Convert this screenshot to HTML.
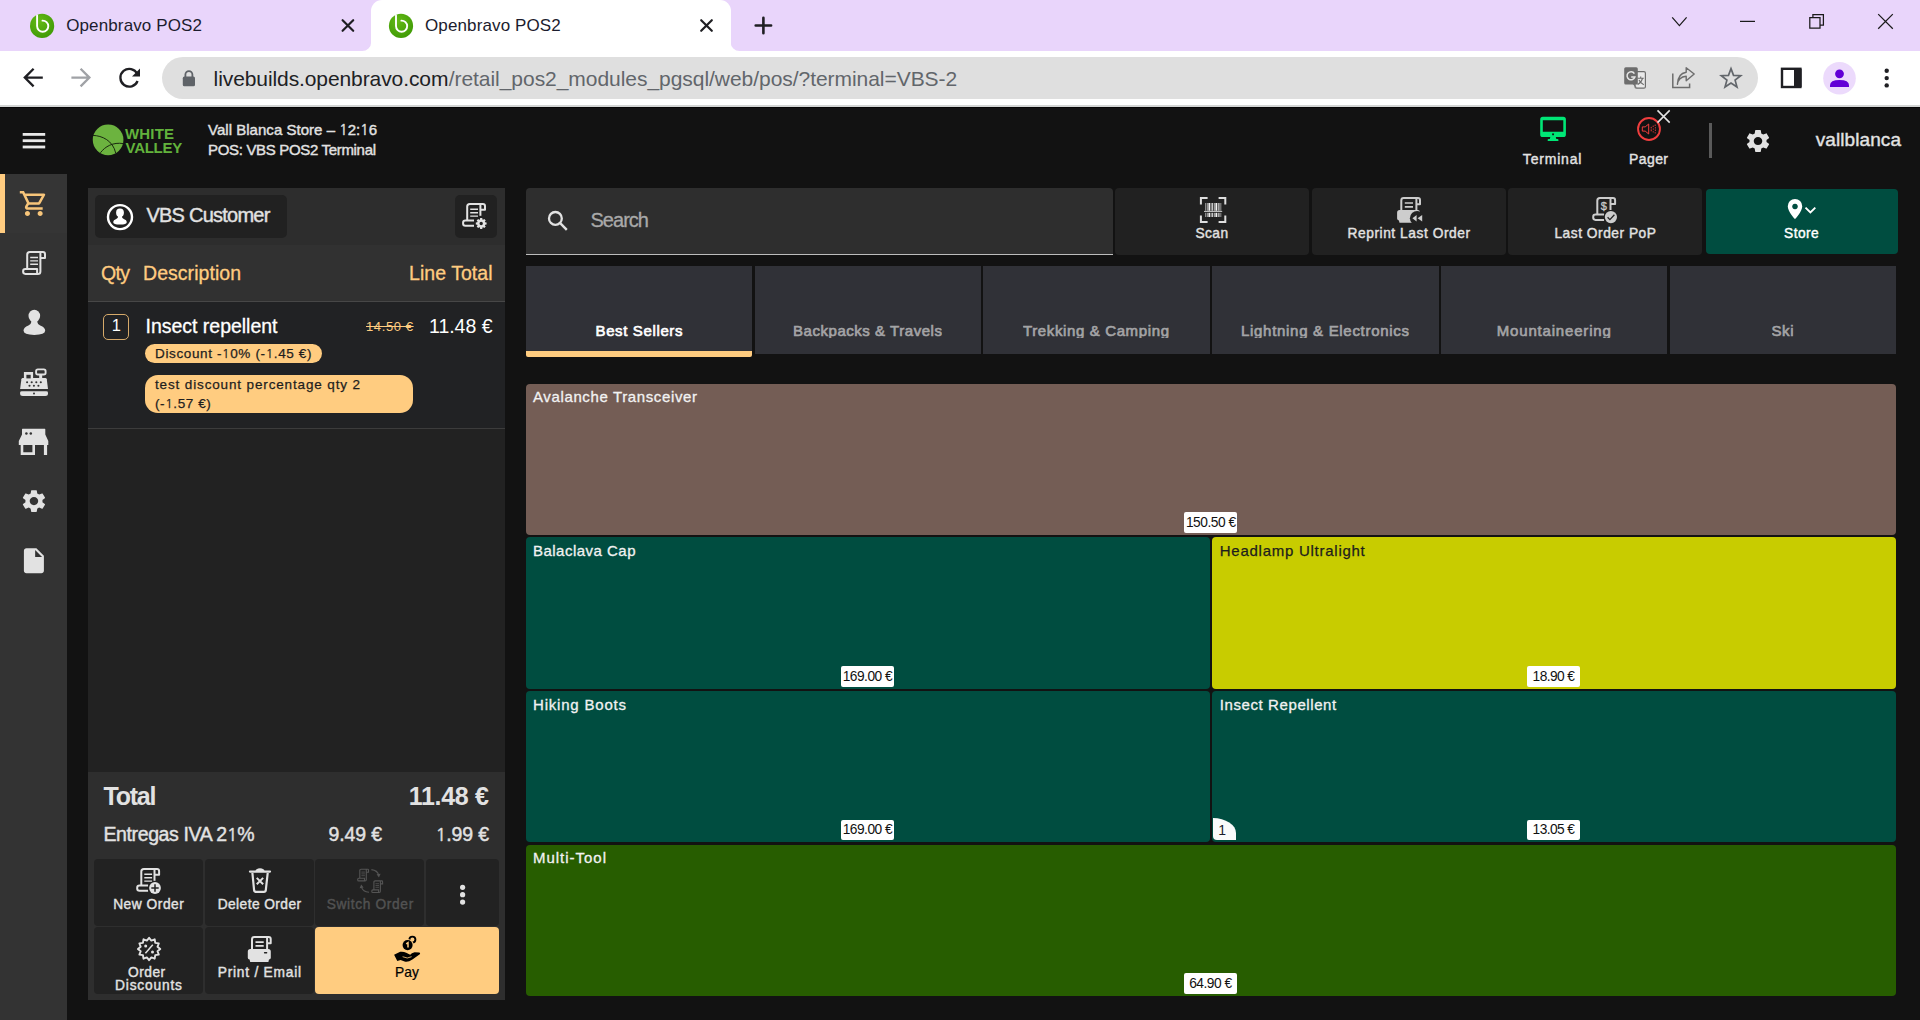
<!DOCTYPE html>
<html lang="en"><head><meta charset="utf-8"><title>Openbravo POS2</title>
<style>
html,body{margin:0;padding:0}
body{width:1920px;height:1020px;overflow:hidden;position:relative;background:#121212;font-family:"Liberation Sans",Arial,sans-serif;}
.r{position:absolute}
.t{position:absolute;white-space:pre;}
.i{position:absolute;display:block;overflow:visible}
.n1{font-family:NanumGothic,"Liberation Sans",sans-serif;font-size:.92em}

</style></head>
<body>
<div class="r" style="left:0px;top:0px;width:1920px;height:51px;background:#e9d5fb;"></div>
<div class="r" style="left:371px;top:0px;width:360px;height:51px;background:#ffffff;border-radius:11px 11px 0 0;"></div>
<div class="r" style="left:0px;top:51px;width:1920px;height:54px;background:#ffffff;"></div>
<div class="r" style="left:0px;top:105px;width:1920px;height:2px;background:#d3d5d4;"></div>
<div class="r" style="left:162px;top:57px;width:1595.5px;height:42px;background:#dfdfdf;border-radius:21px;"></div>
<div class="r" style="left:0px;top:107px;width:1920px;height:913px;background:#121212;"></div>
<div class="r" style="left:0px;top:107px;width:1920px;height:1px;background:#060606;"></div>
<div class="r" style="left:0px;top:174px;width:67px;height:846px;background:#333333;"></div>
<div class="r" style="left:0px;top:174px;width:67px;height:59px;background:#353535;"></div>
<div class="r" style="left:0px;top:174px;width:5px;height:59px;background:#ffcc80;"></div>
<div class="r" style="left:88px;top:188px;width:417px;height:57px;background:#2d2d2d;"></div>
<div class="r" style="left:88px;top:245px;width:417px;height:57px;background:#313131;"></div>
<div class="r" style="left:88px;top:301px;width:417px;height:1px;background:#474747;"></div>
<div class="r" style="left:88px;top:302px;width:417px;height:126px;background:#212224;"></div>
<div class="r" style="left:88px;top:428px;width:417px;height:1px;background:#3c3c3c;"></div>
<div class="r" style="left:88px;top:429px;width:417px;height:343px;background:#222222;"></div>
<div class="r" style="left:88px;top:772px;width:417px;height:228px;background:#2e2e2e;"></div>
<div class="r" style="left:95px;top:195px;width:192px;height:43px;background:#212121;border-radius:5px;"></div>
<div class="r" style="left:455px;top:195px;width:42px;height:43px;background:#212121;border-radius:5px;"></div>
<div class="r" style="left:103px;top:314px;width:26px;height:26px;background:transparent;box-sizing:border-box;border:1px solid #d6aa6a;border-radius:5px;"></div>
<div class="r" style="left:144.5px;top:344px;width:177px;height:19px;background:#ffcc80;border-radius:9.5px;"></div>
<div class="r" style="left:144.5px;top:375px;width:268px;height:38px;background:#ffcc80;border-radius:13px;"></div>
<div class="r" style="left:94px;top:859px;width:109.1px;height:67px;background:#222222;border-radius:4px;"></div>
<div class="r" style="left:204.6px;top:859px;width:109.1px;height:67px;background:#222222;border-radius:4px;"></div>
<div class="r" style="left:315.2px;top:859px;width:109.1px;height:67px;background:#222222;border-radius:4px;"></div>
<div class="r" style="left:425.8px;top:859px;width:73px;height:67px;background:#222222;border-radius:4px;"></div>
<div class="r" style="left:94px;top:927px;width:109.1px;height:67px;background:#222222;border-radius:4px;"></div>
<div class="r" style="left:204.6px;top:927px;width:109.1px;height:67px;background:#222222;border-radius:4px;"></div>
<div class="r" style="left:315.2px;top:927px;width:183.6px;height:67px;background:#ffcc80;border-radius:4px;"></div>
<div class="r" style="left:526px;top:188px;width:587px;height:66px;background:#2e2e2e;border-radius:4px 4px 0 0;"></div>
<div class="r" style="left:526px;top:253.6px;width:587px;height:1.5px;background:#bdbdbd;"></div>
<div class="r" style="left:1115px;top:188px;width:194px;height:67px;background:#212121;border-radius:4px;"></div>
<div class="r" style="left:1312px;top:188px;width:194px;height:67px;background:#212121;border-radius:4px;"></div>
<div class="r" style="left:1508px;top:188px;width:194px;height:67px;background:#212121;border-radius:4px;"></div>
<div class="r" style="left:1706px;top:189px;width:192px;height:65px;background:#004d40;border-radius:4px;"></div>
<div class="r" style="left:526px;top:266px;width:226.3px;height:85px;background:#303137;"></div>
<div class="r" style="left:526px;top:351px;width:226.3px;height:6px;background:#ffcc80;border-radius:0 0 2px 2px;"></div>
<div class="r" style="left:754.74px;top:266px;width:226.3px;height:88px;background:#303137;"></div>
<div class="r" style="left:983.48px;top:266px;width:226.3px;height:88px;background:#303137;"></div>
<div class="r" style="left:1212.22px;top:266px;width:226.3px;height:88px;background:#303137;"></div>
<div class="r" style="left:1440.96px;top:266px;width:226.3px;height:88px;background:#303137;"></div>
<div class="r" style="left:1669.7px;top:266px;width:226.3px;height:88px;background:#303137;"></div>
<div class="r" style="left:526px;top:384px;width:1370px;height:151px;background:#745d55;border-radius:4px;"></div>
<div class="r" style="left:526px;top:537px;width:684px;height:152px;background:#004d40;border-radius:4px;"></div>
<div class="r" style="left:1212px;top:537px;width:684px;height:152px;background:#c8cc00;border-radius:4px;"></div>
<div class="r" style="left:526px;top:691px;width:684px;height:151px;background:#004d40;border-radius:4px;"></div>
<div class="r" style="left:1212px;top:691px;width:684px;height:151px;background:#004d40;border-radius:4px;"></div>
<div class="r" style="left:526px;top:845px;width:1370px;height:151px;background:#275d00;border-radius:4px;"></div>
<div class="r" style="left:1184px;top:512px;width:53px;height:21px;background:#ffffff;border-radius:2px;"></div>
<div class="r" style="left:841px;top:666px;width:53px;height:21px;background:#ffffff;border-radius:2px;"></div>
<div class="r" style="left:1527px;top:666px;width:53px;height:21px;background:#ffffff;border-radius:2px;"></div>
<div class="r" style="left:841px;top:820px;width:53px;height:20px;background:#ffffff;border-radius:2px;"></div>
<div class="r" style="left:1527px;top:820px;width:53px;height:20px;background:#ffffff;border-radius:2px;"></div>
<div class="r" style="left:1184px;top:973px;width:53px;height:21px;background:#ffffff;border-radius:2px;"></div>
<div class="r" style="left:1213px;top:818px;width:23.3px;height:22px;background:#fafafa;border-radius:0 23px 0 4px / 0 15px 0 4px;"></div>
<div class="r" style="left:1709px;top:123px;width:3px;height:35px;background:#5a5a5a;"></div>

<svg class="i" style="left:0;top:0" width="1920" height="1020" viewBox="0 0 1920 1020"><defs><radialGradient id="fav" cx="40%" cy="30%" r="75%"><stop offset="0" stop-color="#63b915"/><stop offset="1" stop-color="#3f9a06"/></radialGradient></defs>
<circle cx="42.1" cy="25.9" r="12.1" fill="url(#fav)"/><path d="M37.1 15.499999999999998V26.099999999999998A5.6 5.6 0 0 0 48.300000000000004 26.099999999999998A5.6 5.600 0 0 0 42.5 20.599999999999998" stroke="#fff" stroke-width="1.9" stroke-linecap="round" fill="none"/>
<circle cx="401" cy="25.9" r="12.1" fill="url(#fav)"/><path d="M396 15.499999999999998V26.099999999999998A5.6 5.6 0 0 0 407.2 26.099999999999998A5.6 5.600 0 0 0 401.4 20.599999999999998" stroke="#fff" stroke-width="1.9" stroke-linecap="round" fill="none"/>
<path d="M342.59999999999997 20.2L353.2 30.8M353.2 20.2L342.59999999999997 30.8" stroke="#1f1f23" stroke-width="2.2" stroke-linecap="round" fill="none"/>
<path d="M701.2 20.2L711.8 30.8M711.8 20.2L701.2 30.8" stroke="#1f1f23" stroke-width="2.2" stroke-linecap="round" fill="none"/>
<path d="M755.7 25.5H771.1M763.4 17.8V33.200" stroke="#1f1f23" stroke-width="2.6" stroke-linecap="round" fill="none"/>
<path d="M1672.2 17.4L1679.4 25.6L1686.6 17.4" stroke="#1a1a1a" stroke-width="1.25" fill="none"/>
<path d="M1740 21.4H1755" stroke="#1a1a1a" stroke-width="1.25" fill="none"/>
<path d="M1809.8 17.5H1820V28H1809.8Z M1812.9 17.2V14.6H1823.4V25.2H1820.3" stroke="#1a1a1a" stroke-width="1.25" fill="none"/>
<path d="M1878.2 14.099999999999998L1892.8 28.7M1892.8 14.099999999999998L1878.2 28.7" stroke="#1a1a1a" stroke-width="1.25" stroke-linecap="butt" fill="none"/>
<path d="M362 51H371.2V42A9 9 0 0 1 362 51Z" fill="#fff"/>
<path d="M739.800 51H730.6V42A9 9 0 0 0 739.800 51Z" fill="#fff"/>
<path d="M42.8 77.6H25.2M33.6 68.8L24.8 77.6L33.6 86.4" stroke="#1f1f23" stroke-width="2.3" fill="none" stroke-linejoin="miter"/>
<path d="M71.4 77.6H89M80.6 68.8L89.4 77.6L80.6 86.4" stroke="#a0a2a6" stroke-width="2.3" fill="none"/>
<path d="M137.3 73.8A8.9 8.9 0 1 0 137.6 81" stroke="#1f1f23" stroke-width="2.3" fill="none"/>
<path d="M140 68.4V76.4H132Z" fill="#1f1f23"/>
<rect x="182.8" y="76.6" width="12.2" height="9.7" rx="1.6" fill="#5f6368"/>
<path d="M185.4 77V74.6A3.5 3.5 0 0 1 192.4 74.6V77" stroke="#5f6368" stroke-width="1.8" fill="none"/>
<rect x="1635" y="71.6" width="10.4" height="16.6" rx="1.5" fill="#e9e9e9" stroke="#6d6d6d" stroke-width="1.2"/>
<path d="M1637.6 78.2H1643.8M1640.7 76.6V78.2M1642.6 78.2Q1641.6 82.4 1637.8 84.6M1639 80Q1640.6 83.4 1643.8 84.8" stroke="#6d6d6d" stroke-width="1.1" fill="none"/>
<path d="M1625.8 67.2H1636.2Q1637.8 67.2 1637.8 68.8V84.6H1634.5L1637.6 88.6 1633 84.6H1625.8Q1624.2 84.6 1624.2 83V68.8Q1624.2 67.2 1625.8 67.2Z" fill="#6d6d6d"/>
<path d="M1634.4 73.6A4 4 0 1 0 1634.9 77H1631.2" stroke="#e6e6e6" stroke-width="1.5" fill="none"/>
<path d="M1672.8 73.5V87.6H1689.6V83.4" stroke="#6d6d6d" stroke-width="1.5" fill="none"/>
<path d="M1677.4 84.4Q1678.2 77 1686.2 76.2V80.8L1694.2 74L1686.2 67.8V72.2Q1677.8 73.4 1677.4 84.4Z" stroke="#6d6d6d" stroke-width="1.4" fill="none" stroke-linejoin="round"/>
<path d="M1731.00 68.60 L1733.53 75.32 L1740.70 75.65 L1735.09 80.13 L1737.00 87.05 L1731.00 83.10 L1725.00 87.05 L1726.91 80.13 L1721.30 75.65 L1728.47 75.32Z" stroke="#62666b" stroke-width="1.7" fill="none" stroke-linejoin="miter"/>
<rect x="1782" y="68.8" width="18.4" height="18.2" fill="none" stroke="#1f1f23" stroke-width="2.4"/>
<rect x="1794" y="68.8" width="7.6" height="18.2" fill="#1f1f23"/>
<circle cx="1839.5" cy="78.3" r="16.3" fill="#ecdafc"/>
<circle cx="1839.5" cy="73.8" r="4.4" fill="#6200d6"/>
<path d="M1830 87V85.2Q1830 80 1839.5 80Q1849 80 1849 85.2V87Z" fill="#6200d6"/>
<circle cx="1886.7" cy="70.8" r="2.2" fill="#1f1f23"/>
<circle cx="1886.7" cy="78.1" r="2.2" fill="#1f1f23"/>
<circle cx="1886.7" cy="85.4" r="2.2" fill="#1f1f23"/>
<rect x="22.7" y="133.0" width="22.5" height="2.8" fill="#e8e8e8"/>
<rect x="22.7" y="139.3" width="22.5" height="2.8" fill="#e8e8e8"/>
<rect x="22.7" y="145.6" width="22.5" height="2.8" fill="#e8e8e8"/>
<circle cx="108.1" cy="139.85" r="15.35" fill="#6cb33f"/>
<path d="M92.8 135.4C102 135.6 113 140.6 115.7 153M100.4 152.8C105 146.6 113 141.9 123.4 143.6" stroke="#15200e" stroke-width="0.95" fill="none"/>
<path fill-rule="evenodd" fill="#00e676" d="M1542.8 116.8H1563.3Q1565.9 116.8 1565.9 119.4V134.4Q1565.9 137 1563.3 137H1542.8Q1540.2 137 1540.2 134.4V119.4Q1540.2 116.8 1542.8 116.8Z M1542.8 120.2V131.8H1563.3V120.2Z M1553.05 133.3A1 1 0 1 0 1553.06 133.3Z"/>
<path fill="#00e676" d="M1550.4 136.8H1555.7L1556.3 138.9H1557.6Q1558.4 138.9 1558.4 139.7V141H1547.7V139.7Q1547.7 138.9 1548.5 138.9H1549.8Z"/>
<circle cx="1649" cy="129" r="10.95" fill="none" stroke="#f03e3e" stroke-width="1.9"/>
<path d="M1642.3 126.9H1645.2L1648.7 124V134L1645.2 131.1H1642.3Z" fill="none" stroke="#f03e3e" stroke-width="1" stroke-linejoin="round"/>
<circle cx="1651.2" cy="127.3" r="0.62" fill="#f03e3e"/>
<circle cx="1651.2" cy="129" r="0.62" fill="#f03e3e"/>
<circle cx="1651.2" cy="130.7" r="0.62" fill="#f03e3e"/>
<circle cx="1653.2" cy="126.2" r="0.62" fill="#f03e3e"/>
<circle cx="1653.4" cy="129" r="0.62" fill="#f03e3e"/>
<circle cx="1653.2" cy="131.8" r="0.62" fill="#f03e3e"/>
<circle cx="1655.2" cy="125.2" r="0.62" fill="#f03e3e"/>
<circle cx="1655.4" cy="127.8" r="0.62" fill="#f03e3e"/>
<circle cx="1655.4" cy="130.2" r="0.62" fill="#f03e3e"/>
<circle cx="1655.2" cy="132.8" r="0.62" fill="#f03e3e"/>
<path d="M1657.5 110.4L1669.6999999999998 122.6M1669.6999999999998 110.4L1657.5 122.6" stroke="#e4e4e4" stroke-width="1.55" stroke-linecap="butt" fill="none"/>
<path transform="translate(1743.75 127.32) scale(1.1877 1.1400)" d="M19.14 12.94c.04-.3.06-.61.06-.94 0-.32-.02-.64-.07-.94l2.030-1.580c.18-.14.23-.41.12-.61l-1.920-3.320c-.12-.22-.37-.29-.59-.22l-2.390.96c-.5-.38-1.030-.7-1.620-.94l-.36-2.540c-.04-.24-.24-.41-.48-.41h-3.840c-.24 0-.43.17-.47.41l-.36 2.540c-.59.24-1.130.57-1.620.94l-2.390-.96c-.22-.08-.47 0-.59.22L2.740 8.870c-.12.21-.08.47.12.61l2.030 1.580c-.05.3-.09.63-.09.94s.02.64.07.94l-2.030 1.580c-.18.14-.23.41-.12.61l1.920 3.320c.12.22.37.29.59.22l2.390-.96c.5.38 1.030.7 1.620.94l.36 2.540c.05.24.24.41.48.41h3.840c.24 0 .44-.17.47-.41l.36-2.540c.59-.24 1.130-.56 1.620-.94l2.390.96c.22.08.47 0 .59-.22l1.920-3.320c.12-.22.07-.47-.12-.61l-2.010-1.580zM12 15.600c-1.980 0-3.600-1.620-3.600-3.600s1.620-3.600 3.600-3.600 3.600 1.620 3.600 3.600-1.620 3.600-3.600 3.600z" fill="#e2e2e2"/>
<path transform="translate(19.70 487.42) scale(1.1877 1.1400)" d="M19.14 12.94c.04-.3.06-.61.06-.94 0-.32-.02-.64-.07-.94l2.030-1.580c.18-.14.23-.41.12-.61l-1.920-3.320c-.12-.22-.37-.29-.59-.22l-2.390.96c-.5-.38-1.030-.7-1.620-.94l-.36-2.540c-.04-.24-.24-.41-.48-.41h-3.840c-.24 0-.43.17-.47.41l-.36 2.540c-.59.24-1.130.57-1.620.94l-2.390-.96c-.22-.08-.47 0-.59.22L2.740 8.870c-.12.21-.08.47.12.61l2.030 1.580c-.05.3-.09.63-.09.94s.02.64.07.94l-2.030 1.580c-.18.14-.23.41-.12.61l1.920 3.320c.12.22.37.29.59.22l2.390-.96c.5.38 1.030.7 1.620.94l.36 2.540c.05.24.24.41.48.41h3.840c.24 0 .44-.17.47-.41l.36-2.540c.59-.24 1.130-.56 1.620-.94l2.390.96c.22.08.47 0 .59-.22l1.920-3.320c.12-.22.07-.47-.12-.61l-2.010-1.580zM12 15.600c-1.980 0-3.600-1.620-3.600-3.600s1.620-3.600 3.600-3.600 3.600 1.620 3.600 3.600-1.620 3.600-3.600 3.600z" fill="#e2e2e2"/>
<path transform="translate(18.55 188.4) scale(1.27 1.255)" d="M15.55 13c.75 0 1.410-.41 1.750-1.030l3.580-6.490c.37-.66-.11-1.480-.87-1.480H5.210l-.94-2H1v2h2l3.600 7.590-1.350 2.440C4.520 15.370 5.480 17 7 17h12v-2H7l1.100-2h7.450zM6.160 6h12.150l-2.760 5H8.530L6.160 6zM7 18c-1.100 0-1.990.9-1.990 2S5.900 22 7 22s2-.9 2-2-.9-2-2-2zm10 0c-1.100 0-1.990.9-1.990 2s.89 2 1.990 2 2-.9 2-2-.9-2-2-2z" fill="#f7c57a"/>
<g transform="translate(22 251)" ><g fill="none" stroke="#e2e2e2" stroke-width="2.0" stroke-linejoin="round" stroke-linecap="butt"><path d="M5.2 17.2V3.7Q5.2 1.1 7.8 1.1H20.9Q23 1.1 23 3.2V7H18.4"/><path d="M18.4 1.6V20.4Q18.4 22.9 15.9 22.9H3.4Q1.1 22.9 1.1 20.6V20.4Q1.1 18.1 3.4 18.1H15.1V22.4"/><path d="M8.2 6.5H16M8.2 9.9H16M8.2 13.3H16" stroke-width="1.4"/></g></g>
<ellipse cx="34.3" cy="315.9" rx="5.8" ry="6.2" fill="#e2e2e2"/>
<path d="M31.2 320V322.2Q31.2 324.2 28.4 325.4Q23.5 327.4 23.5 330.6Q23.5 334.9 34.3 334.9Q45.2 334.9 45.2 330.6Q45.2 327.4 40.2 325.4Q37.4 324.2 37.4 322.2V320Z" fill="#e2e2e2"/>
<path d="M21.9 391.2H46.2Q48 391.2 48 392.6V393.6Q48 396.1 45.4 396.1H22.8Q20.1 396.1 20.1 393.6V392.6Q20.1 391.2 21.9 391.2Z" fill="#e2e2e2"/>
<circle cx="34" cy="393.5" r="1" fill="#333333"/>
<path d="M22.9 377.9H45.3Q46.6 377.9 46.8 379.2L48 388.9H20.1L21.4 379.2Q21.6 377.9 22.9 377.9Z" fill="#e2e2e2"/>
<circle cx="27.1" cy="382.3" r="1.05" fill="#333333"/>
<circle cx="31.7" cy="382.3" r="1.05" fill="#333333"/>
<circle cx="36.3" cy="382.3" r="1.05" fill="#333333"/>
<circle cx="40.8" cy="382.3" r="1.05" fill="#333333"/>
<circle cx="29.5" cy="385.8" r="1.05" fill="#333333"/>
<circle cx="33.9" cy="385.8" r="1.05" fill="#333333"/>
<circle cx="38.4" cy="385.8" r="1.05" fill="#333333"/>
<path d="M23.9 372H33.1V378.2H23.9Z" fill="#e2e2e2"/>
<rect x="26.4" y="374.8" width="4.3" height="3.6" fill="#333333"/>
<rect x="36.1" y="369.4" width="9.5" height="5.1" rx="1.8" fill="none" stroke="#e2e2e2" stroke-width="1.9"/>
<rect x="39.2" y="375" width="3" height="3.2" fill="#e2e2e2"/>
<path d="M22.5 428.8H44.8Q45.3 428.8 45.3 429.4V434.6L48.3 441V444.9H18.8V441L22 434.6V429.4Q22 428.8 22.5 428.8Z" fill="#e2e2e2"/>
<circle cx="26.4" cy="433.4" r="1.25" fill="#333333"/><circle cx="30.8" cy="433.4" r="1.25" fill="#333333"/>
<path d="M22 444.5V453.6H33.7V444.5" fill="none" stroke="#e2e2e2" stroke-width="2.6"/>
<rect x="43.9" y="444.5" width="3.2" height="10.5" fill="#e2e2e2"/>
<path transform="translate(18.9 545.7) scale(1.25)" d="M6 2c-1.100 0-1.990.9-1.990 2L4 20c0 1.100.890 2 1.990 2H18c1.100 0 2-.9 2-2V8l-6-6H6zm7 7V3.500L18.500 9H13z" fill="#e2e2e2"/>
<circle cx="120" cy="217.1" r="12" fill="none" stroke="#fff" stroke-width="2.4"/>
<ellipse cx="120" cy="212.7" rx="3.9" ry="4.2" fill="#fff"/>
<path d="M118 215.5V217Q118 218.2 116.2 218.9Q113.2 220 113.2 221.9Q113.2 224.5 120 224.5Q126.8 224.5 126.8 221.9Q126.8 220 123.8 218.9Q122 218.2 122 217V215.5Z" fill="#fff"/>
<g transform="translate(462 202.8)" ><g fill="none" stroke="#e2e2e2" stroke-width="2.0" stroke-linejoin="round" stroke-linecap="butt"><path d="M5.2 17.2V3.7Q5.2 1.1 7.8 1.1H20.9Q23 1.1 23 3.2V7H18.4"/><path d="M18.4 1.6V13"/><path d="M12 17.6H3.4Q1.1 17.6 1.1 19.9V20.6Q1.1 22.9 3.4 22.9H12"/><path d="M8.2 6.5H16M8.2 9.9H16M8.2 13.3H16" stroke-width="1.4"/></g></g>
<path fill-rule="evenodd" fill="#e2e2e2" d="M479.96 219.59 L480.13 218.11 L482.27 218.11 L482.44 219.59 L483.09 219.86 L484.26 218.93 L485.77 220.44 L484.84 221.61 L485.11 222.26 L486.59 222.43 L486.59 224.57 L485.11 224.74 L484.84 225.39 L485.77 226.56 L484.26 228.07 L483.09 227.14 L482.44 227.41 L482.27 228.89 L480.13 228.89 L479.96 227.41 L479.31 227.14 L478.14 228.07 L476.63 226.56 L477.56 225.39 L477.29 224.74 L475.81 224.57 L475.81 222.43 L477.29 222.26 L477.56 221.61 L476.63 220.44 L478.14 218.93 L479.31 219.86Z M482.90 223.50 A1.7 1.7 0 1 0 479.50 223.50 A1.7 1.7 0 1 0 482.90 223.50Z"/>
<g transform="translate(136.1 867.8)" ><g fill="none" stroke="#e2e2e2" stroke-width="2.0" stroke-linejoin="round" stroke-linecap="butt"><path d="M5.2 17.2V3.7Q5.2 1.1 7.8 1.1H20.9Q23 1.1 23 3.2V7H18.4"/><path d="M18.4 1.6V13"/><path d="M12 17.6H3.4Q1.1 17.6 1.1 19.9V20.6Q1.1 22.9 3.4 22.9H12"/><path d="M8.2 6.5H16M8.2 9.9H16M8.2 13.3H16" stroke-width="1.4"/></g></g>
<circle cx="155" cy="888" r="7.1" fill="#222222"/><circle cx="155" cy="888" r="5.9" fill="#e2e2e2"/>
<path d="M151.3 888H158.7M155 884.3V891.7" stroke="#222" stroke-width="1.5" fill="none"/>
<path d="M250 871.6H270M256.8 870.4Q260 868.6 263.2 870.4" stroke="#e2e2e2" stroke-width="2.3" stroke-linecap="round" fill="none"/>
<path d="M252.4 873L254.1 890.2Q254.3 891.9 256 891.9H263.9Q265.6 891.9 265.8 890.2L267.7 873" stroke="#e2e2e2" stroke-width="2.2" fill="none" stroke-linejoin="round"/>
<path d="M256.75 877.9L263.15 884.3000000000001M263.15 877.9L256.75 884.3000000000001" stroke="#e2e2e2" stroke-width="2.0" stroke-linecap="butt" fill="none"/>
<g transform="translate(357.1 868.7)" fill="none" stroke="#545454" stroke-width="1.1"><path d="M2.7 9.2V1.8Q2.7 0.6 3.9 0.6H10.6Q11.4 0.6 11.4 1.4V3.6H9.2M9.2 0.8V11Q9.2 12.2 8 12.2H1.6Q0.6 12.2 0.6 11.2V10.6Q0.6 9.6 1.6 9.6H7.4V12"/><path d="M4.3 3.4H7.8M4.3 5.2H7.8M4.3 7H7.8" stroke-width="0.8"/></g>
<g transform="translate(371.2 880.3)" fill="none" stroke="#545454" stroke-width="1.1"><path d="M2.7 9.2V1.8Q2.7 0.6 3.9 0.6H10.6Q11.4 0.6 11.4 1.4V3.6H9.2M9.2 0.8V11Q9.2 12.2 8 12.2H1.6Q0.6 12.2 0.6 11.2V10.6Q0.6 9.6 1.6 9.6H7.4V12"/><path d="M4.3 3.4H7.8M4.3 5.2H7.8M4.3 7H7.8" stroke-width="0.8"/></g>
<path d="M371.4 869.6Q377.6 870.2 378.8 875.4" stroke="#545454" stroke-width="1.1" fill="none"/><path d="M376.6 874.2L378.9 877.4L380.6 873.8Z" fill="#545454"/>
<path d="M369 892.3Q362.8 891.8 361.4 886.8" stroke="#545454" stroke-width="1.1" fill="none"/><path d="M359.6 888.2L361.2 884.6L363.6 887.6Z" fill="#545454"/>
<circle cx="462.6" cy="887.3" r="2.6" fill="#e2e2e2"/>
<circle cx="462.6" cy="894.7" r="2.6" fill="#e2e2e2"/>
<circle cx="462.6" cy="902.1" r="2.6" fill="#e2e2e2"/>
<path d="M149.10 937.80 L151.35 940.60 L154.70 939.30 L155.25 942.85 L158.80 943.40 L157.50 946.75 L160.30 949.00 L157.50 951.25 L158.80 954.60 L155.25 955.15 L154.70 958.70 L151.35 957.40 L149.10 960.20 L146.85 957.40 L143.50 958.70 L142.95 955.15 L139.40 954.60 L140.70 951.25 L137.90 949.00 L140.70 946.75 L139.40 943.40 L142.95 942.85 L143.50 939.30 L146.85 940.60Z" fill="none" stroke="#e2e2e2" stroke-width="1.9" stroke-linejoin="round"/>
<path d="M145.4 953.2L152.8 944.8" stroke="#e2e2e2" stroke-width="1.5" fill="none"/><circle cx="145.7" cy="945.9" r="1.5" fill="#e2e2e2"/><circle cx="152.5" cy="952.1" r="1.5" fill="#e2e2e2"/>
<g transform="translate(247.7 936.1)" ><g fill="none" stroke="#e2e2e2" stroke-width="2" stroke-linejoin="round"><path d="M4.3 13V3.4Q4.3 1 6.7 1H21Q23 1 23 3V7.2H19.4"/><path d="M19.4 1.6V13"/><path d="M7.8 6H16M7.8 9.8H16" stroke-width="1.7"/></g><path d="M2.6 13H20.6Q23.1 13 23.1 15.5V21.6Q23.1 23.4 21.3 23.4L20.7 25.8H2.5L1.9 23.4Q0.1 23.4 0.1 21.6V15.5Q0.1 13 2.6 13Z" fill="#e2e2e2"/><rect x="16.2" y="16" width="3.4" height="1.3" rx="0.6" fill="#222"/></g>
<circle cx="412.4" cy="939.6" r="3.0" fill="none" stroke="#000" stroke-width="1.9"/>
<circle cx="407.6" cy="945.1" r="6.1" fill="#ffcc80"/><circle cx="407.6" cy="945.1" r="5.05" fill="#000"/>
<path d="M406.2 943.9L408 942.7V947.6" stroke="#ffcc80" stroke-width="1.5" fill="none"/>
<path d="M394.1 954.8L400.2 951.8Q403.4 951.3 406.2 952.7L410.2 954.7Q411.4 952.7 414.6 952.2L419.4 952.6Q420.7 953.2 419.8 954.3L412.4 959.5Q408 962.5 404.6 961.5L400.6 960L397.3 961Z" fill="#000"/>
<path d="M402.6 956.7Q407.4 959.3 411.6 956.7" stroke="#ffcc80" stroke-width="0.8" fill="none"/>
<circle cx="555.4" cy="218.4" r="6.4" fill="none" stroke="#e2e2e2" stroke-width="2.3"/><path d="M560.2 223.2L566.8 229.8" stroke="#e2e2e2" stroke-width="2.4" fill="none"/>
<path d="M1200.9 204.4V198H1207.6M1218.6 198H1225.3V204.4M1225.3 215.6V222H1218.6M1207.6 222H1200.9V215.6" stroke="#dedede" stroke-width="2" fill="none"/>
<rect x="1205.0" y="203" width="1.3" height="7.8" fill="#8a8a8a"/><rect x="1205.0" y="212.8" width="1.3" height="4.2" fill="#8a8a8a"/>
<rect x="1206.9" y="203" width="0.9" height="7.8" fill="#b0b0b0"/><rect x="1206.9" y="212.8" width="0.9" height="4.2" fill="#b0b0b0"/>
<rect x="1208.4" y="203" width="1.6" height="7.8" fill="#f0f0f0"/><rect x="1208.4" y="212.8" width="1.6" height="4.2" fill="#f0f0f0"/>
<rect x="1210.6" y="203" width="1.0" height="7.8" fill="#c8c8c8"/><rect x="1210.6" y="212.8" width="1.0" height="4.2" fill="#c8c8c8"/>
<rect x="1212.2" y="203" width="1.0" height="7.8" fill="#f0f0f0"/><rect x="1212.2" y="212.8" width="1.0" height="4.2" fill="#f0f0f0"/>
<rect x="1214.0" y="203" width="0.8" height="7.8" fill="#bdbdbd"/><rect x="1214.0" y="212.8" width="0.8" height="4.2" fill="#bdbdbd"/>
<rect x="1215.4" y="203" width="1.9" height="7.8" fill="#f4f4f4"/><rect x="1215.4" y="212.8" width="1.9" height="4.2" fill="#f4f4f4"/>
<rect x="1218.0" y="203" width="0.9" height="7.8" fill="#b8b8b8"/><rect x="1218.0" y="212.8" width="0.9" height="4.2" fill="#b8b8b8"/>
<rect x="1219.5" y="203" width="0.8" height="7.8" fill="#d8d8d8"/><rect x="1219.5" y="212.8" width="0.8" height="4.2" fill="#d8d8d8"/>
<rect x="1220.6" y="203" width="0.7" height="7.8" fill="#9a9a9a"/><rect x="1220.6" y="212.8" width="0.7" height="4.2" fill="#9a9a9a"/>
<rect x="1204" y="210.9" width="18.2" height="1" fill="#cfcfcf"/>
<g transform="translate(1397.0 197.0)" ><g fill="none" stroke="#cdcdcd" stroke-width="2" stroke-linejoin="round"><path d="M4.3 13V3.4Q4.3 1 6.7 1H21Q23 1 23 3V7.2H19.4"/><path d="M19.4 1.6V13"/><path d="M7.8 6H16M7.8 9.8H16" stroke-width="1.7"/></g><path d="M2.6 13H20.6Q23.1 13 23.1 15.5V21.6Q23.1 23.4 21.3 23.4L20.7 25.8H2.5L1.9 23.4Q0.1 23.4 0.1 21.6V15.5Q0.1 13 2.6 13Z" fill="#cdcdcd"/></g>
<circle cx="1417.2" cy="218.2" r="7.3" fill="#212121"/>
<path d="M1416.6 215.1V221.5L1412.4 218.3ZM1422.2 215.1V221.5L1417.6 218.3Z" fill="#cdcdcd"/>
<g transform="translate(1592.1 197.0)" ><g fill="none" stroke="#cdcdcd" stroke-width="2.0" stroke-linejoin="round" stroke-linecap="butt"><path d="M5.2 17.2V3.7Q5.2 1.1 7.8 1.1H20.9Q23 1.1 23 3.2V7H18.4"/><path d="M18.4 1.6V13"/><path d="M12 17.6H3.4Q1.1 17.6 1.1 19.9V20.6Q1.1 22.9 3.4 22.9H12"/></g></g>
<circle cx="1610.9" cy="217.1" r="7.2" fill="#212121"/><circle cx="1610.9" cy="217.1" r="6.1" fill="#cdcdcd"/>
<path d="M1607.6 217.2L1609.9 219.6L1614.4 214.7" stroke="#212121" stroke-width="1.3" fill="none"/>
<path fill-rule="evenodd" fill="#fff" d="M1795 199A7.25 7.25 0 0 1 1802.25 206.25C1802.25 211.6 1795 219.2 1795 219.2C1795 219.200 1787.750 211.6 1787.75 206.25A7.25 7.25 0 0 1 1795 199Z M1795 203.7A2.8 2.8 0 1 0 1795.01 203.7Z"/>
<path d="M1805.5 207.6L1810.4 212.4L1815.3 207.6" stroke="#fff" stroke-width="1.9" fill="none"/></svg>
<span class="t" id="tab1" style="top:17.00px;font-size:17px;line-height:17px;font-weight:400;color:#1c1c2e;letter-spacing:0.123px;left:66.2px;">Openbravo POS2</span>
<span class="t" id="tab2" style="top:17.00px;font-size:17px;line-height:17px;font-weight:400;color:#1c1c2e;letter-spacing:0.123px;left:425px;">Openbravo POS2</span>
<span class="t" id="url1" style="top:68.00px;font-size:21px;line-height:21px;font-weight:400;color:#202124;letter-spacing:-0.094px;left:213.6px;">livebuilds.openbravo.com</span>
<span class="t" id="url2" style="top:68.00px;font-size:21px;line-height:21px;font-weight:400;color:#62666b;letter-spacing:-0.045px;left:448.7px;">/retail_pos2_modules_pgsql/web/pos/?terminal=VBS-2</span>
<span class="t" id="h1" style="top:122.01px;font-size:15px;line-height:15px;font-weight:400;color:#e2e2e2;letter-spacing:0.031px;-webkit-text-stroke:0.4px #e2e2e2;left:208px;">Vall Blanca Store – <span class="n1">1</span>2:<span class="n1">1</span>6</span>
<span class="t" id="h2" style="top:142.01px;font-size:15px;line-height:15px;font-weight:400;color:#e2e2e2;letter-spacing:-0.324px;-webkit-text-stroke:0.4px #e2e2e2;left:208px;">POS: VBS POS2 Terminal</span>
<span class="t" id="lg1" style="top:126.01px;font-size:15px;line-height:15px;font-weight:700;color:#62b23c;letter-spacing:0.168px;left:125px;">WHITE</span>
<span class="t" id="lg2" style="top:140.01px;font-size:15px;line-height:15px;font-weight:700;color:#62b23c;letter-spacing:-0.292px;left:125.6px;">VALLEY</span>
<span class="t" id="term" style="top:152.00px;font-size:14px;line-height:14px;font-weight:400;color:#e2e2e2;letter-spacing:0.799px;-webkit-text-stroke:0.4px #e2e2e2;left:1552.50px;transform:translateX(-50%);">Terminal</span>
<span class="t" id="pager" style="top:152.00px;font-size:14px;line-height:14px;font-weight:400;color:#e2e2e2;letter-spacing:0.410px;-webkit-text-stroke:0.4px #e2e2e2;left:1648.71px;transform:translateX(-50%);">Pager</span>
<span class="t" id="user" style="top:130.00px;font-size:19px;line-height:19px;font-weight:400;color:#e2e2e2;letter-spacing:0.089px;-webkit-text-stroke:0.4px #e2e2e2;right:18.91px;">vallblanca</span>
<span class="t" id="cust" style="top:205.01px;font-size:20px;line-height:20px;font-weight:400;color:#e2e2e2;letter-spacing:-0.751px;-webkit-text-stroke:0.4px #e2e2e2;left:146.4px;">VBS Customer</span>
<span class="t" id="qty" style="top:264.01px;font-size:19.5px;line-height:19.5px;font-weight:400;color:#ffcc80;letter-spacing:-0.672px;-webkit-text-stroke:0.3px #ffcc80;left:101px;">Qty</span>
<span class="t" id="desc" style="top:264.01px;font-size:19.5px;line-height:19.5px;font-weight:400;color:#ffcc80;letter-spacing:0.045px;-webkit-text-stroke:0.3px #ffcc80;left:143px;">Description</span>
<span class="t" id="ltot" style="top:264.01px;font-size:19.5px;line-height:19.5px;font-weight:400;color:#ffcc80;letter-spacing:0.042px;-webkit-text-stroke:0.3px #ffcc80;right:1427.46px;">Line Total</span>
<span class="t" id="q1" style="top:317.01px;font-size:16.5px;line-height:16.5px;font-weight:400;color:#ffffff;letter-spacing:0.000px;left:116.30px;transform:translateX(-50%);font-family:NanumGothic,"Liberation Sans",sans-serif;">1</span>
<span class="t" id="prod" style="top:317.01px;font-size:19.5px;line-height:19.5px;font-weight:400;color:#ffffff;letter-spacing:-0.017px;-webkit-text-stroke:0.3px #ffffff;left:145.5px;">Insect repellent</span>
<span class="t" id="oldp" style="top:320.01px;font-size:13px;line-height:13px;font-weight:400;color:#ffcc80;letter-spacing:0.604px;left:366px;text-decoration:line-through;">14.50 €</span>
<span class="t" id="newp" style="top:317.01px;font-size:19.5px;line-height:19.5px;font-weight:400;color:#ffffff;letter-spacing:-0.021px;right:1427.52px;">11.48 €</span>
<span class="t" id="d1" style="top:347.01px;font-size:13.5px;line-height:13.5px;font-weight:400;color:#1e1e1e;letter-spacing:0.630px;-webkit-text-stroke:0.25px #1e1e1e;left:155px;">Discount -<span class="n1">1</span>0% (-<span class="n1">1</span>.45 €)</span>
<span class="t" id="d2" style="top:378.01px;font-size:13.5px;line-height:13.5px;font-weight:400;color:#1e1e1e;letter-spacing:0.858px;-webkit-text-stroke:0.25px #1e1e1e;left:155px;">test discount percentage qty 2</span>
<span class="t" id="d3" style="top:397.01px;font-size:13.5px;line-height:13.5px;font-weight:400;color:#1e1e1e;letter-spacing:0.592px;-webkit-text-stroke:0.25px #1e1e1e;left:155px;">(-<span class="n1">1</span>.57 €)</span>
<span class="t" id="tot" style="top:784.00px;font-size:25px;line-height:25px;font-weight:700;color:#e2e2e2;letter-spacing:-1.219px;left:103.5px;">Total</span>
<span class="t" id="totv" style="top:784.00px;font-size:25px;line-height:25px;font-weight:700;color:#e2e2e2;letter-spacing:-0.305px;right:1431.31px;">11.48 €</span>
<span class="t" id="tax" style="top:825.01px;font-size:19.5px;line-height:19.5px;font-weight:400;color:#e2e2e2;letter-spacing:-0.391px;-webkit-text-stroke:0.4px #e2e2e2;left:103.5px;">Entregas IVA 2<span class="n1">1</span>%</span>
<span class="t" id="tax1" style="top:825.01px;font-size:19.5px;line-height:19.5px;font-weight:400;color:#e2e2e2;letter-spacing:-0.144px;-webkit-text-stroke:0.4px #e2e2e2;right:1538.14px;">9.49 €</span>
<span class="t" id="tax2" style="top:825.01px;font-size:19.5px;line-height:19.5px;font-weight:400;color:#e2e2e2;letter-spacing:-0.170px;-webkit-text-stroke:0.4px #e2e2e2;right:1431.17px;"><span class="n1">1</span>.99 €</span>
<span class="t" id="b1" style="top:898.01px;font-size:13.75px;line-height:13.75px;font-weight:400;color:#e2e2e2;letter-spacing:0.527px;-webkit-text-stroke:0.4px #e2e2e2;left:148.76px;transform:translateX(-50%);">New Order</span>
<span class="t" id="b2" style="top:898.01px;font-size:13.75px;line-height:13.75px;font-weight:400;color:#e2e2e2;letter-spacing:0.426px;-webkit-text-stroke:0.4px #e2e2e2;left:259.61px;transform:translateX(-50%);">Delete Order</span>
<span class="t" id="b3" style="top:898.01px;font-size:13.75px;line-height:13.75px;font-weight:400;color:#525252;letter-spacing:0.639px;-webkit-text-stroke:0.4px #525252;left:370.32px;transform:translateX(-50%);">Switch Order</span>
<span class="t" id="b4a" style="top:966.01px;font-size:13.75px;line-height:13.75px;font-weight:400;color:#e2e2e2;letter-spacing:0.461px;-webkit-text-stroke:0.4px #e2e2e2;left:146.83px;transform:translateX(-50%);">Order</span>
<span class="t" id="b4b" style="top:979.00px;font-size:13.75px;line-height:13.75px;font-weight:400;color:#e2e2e2;letter-spacing:0.828px;-webkit-text-stroke:0.4px #e2e2e2;left:148.91px;transform:translateX(-50%);">Discounts</span>
<span class="t" id="b5" style="top:966.01px;font-size:13.75px;line-height:13.75px;font-weight:400;color:#e2e2e2;letter-spacing:0.773px;-webkit-text-stroke:0.4px #e2e2e2;left:259.79px;transform:translateX(-50%);">Print / Email</span>
<span class="t" id="b6" style="top:966.01px;font-size:13.75px;line-height:13.75px;font-weight:400;color:#000000;letter-spacing:0.148px;-webkit-text-stroke:0.2px #000000;left:407.07px;transform:translateX(-50%);">Pay</span>
<span class="t" id="srch" style="top:210.01px;font-size:20px;line-height:20px;font-weight:400;color:#a9a9a9;letter-spacing:-0.975px;-webkit-text-stroke:0.3px #a9a9a9;left:590.5px;">Search</span>
<span class="t" id="a1" style="top:227.00px;font-size:13.75px;line-height:13.75px;font-weight:400;color:#e2e2e2;letter-spacing:0.385px;-webkit-text-stroke:0.4px #e2e2e2;left:1211.99px;transform:translateX(-50%);">Scan</span>
<span class="t" id="a2" style="top:227.00px;font-size:13.75px;line-height:13.75px;font-weight:400;color:#e2e2e2;letter-spacing:0.552px;-webkit-text-stroke:0.4px #e2e2e2;left:1409.08px;transform:translateX(-50%);">Reprint Last Order</span>
<span class="t" id="a3" style="top:227.00px;font-size:13.75px;line-height:13.75px;font-weight:400;color:#e2e2e2;letter-spacing:0.517px;-webkit-text-stroke:0.4px #e2e2e2;left:1605.46px;transform:translateX(-50%);">Last Order PoP</span>
<span class="t" id="a4" style="top:227.00px;font-size:13.75px;line-height:13.75px;font-weight:400;color:#ffffff;letter-spacing:0.456px;-webkit-text-stroke:0.4px #ffffff;left:1801.63px;transform:translateX(-50%);">Store</span>
<span class="t" id="dol" style="top:201.00px;font-size:11px;line-height:11px;font-weight:400;color:#cdcdcd;letter-spacing:0.000px;-webkit-text-stroke:0.3px #cdcdcd;left:1603.70px;transform:translateX(-50%);">$</span>
<span class="t" id="c1" style="top:323.01px;font-size:15px;line-height:15px;font-weight:400;color:#ffffff;letter-spacing:0.632px;-webkit-text-stroke:0.65px #ffffff;left:639.32px;transform:translateX(-50%);overflow:hidden;height:15px;">Best Sellers</span>
<span class="t" id="c2" style="top:323.01px;font-size:15px;line-height:15px;font-weight:400;color:#a4a4a6;letter-spacing:0.543px;-webkit-text-stroke:0.65px #a4a4a6;left:867.77px;transform:translateX(-50%);overflow:hidden;height:15px;">Backpacks &amp; Travels</span>
<span class="t" id="c3" style="top:323.01px;font-size:15px;line-height:15px;font-weight:400;color:#a4a4a6;letter-spacing:0.627px;-webkit-text-stroke:0.65px #a4a4a6;left:1096.31px;transform:translateX(-50%);overflow:hidden;height:15px;">Trekking &amp; Camping</span>
<span class="t" id="c4" style="top:323.01px;font-size:15px;line-height:15px;font-weight:400;color:#a4a4a6;letter-spacing:0.700px;-webkit-text-stroke:0.65px #a4a4a6;left:1325.35px;transform:translateX(-50%);overflow:hidden;height:15px;">Lightning &amp; Electronics</span>
<span class="t" id="c5" style="top:323.01px;font-size:15px;line-height:15px;font-weight:400;color:#a4a4a6;letter-spacing:0.815px;-webkit-text-stroke:0.65px #a4a4a6;left:1554.21px;transform:translateX(-50%);overflow:hidden;height:15px;">Mountaineering</span>
<span class="t" id="c6" style="top:323.01px;font-size:15px;line-height:15px;font-weight:400;color:#a4a4a6;letter-spacing:0.578px;-webkit-text-stroke:0.65px #a4a4a6;left:1782.79px;transform:translateX(-50%);overflow:hidden;height:15px;">Ski</span>
<span class="t" id="p1" style="top:389.01px;font-size:15px;line-height:15px;font-weight:400;color:#f2f2f2;letter-spacing:0.626px;-webkit-text-stroke:0.3px #f2f2f2;left:533px;">Avalanche Transceiver</span>
<span class="t" id="p2" style="top:543.00px;font-size:15px;line-height:15px;font-weight:400;color:#f2f2f2;letter-spacing:0.480px;-webkit-text-stroke:0.3px #f2f2f2;left:533px;">Balaclava Cap</span>
<span class="t" id="p3" style="top:543.00px;font-size:15px;line-height:15px;font-weight:400;color:#1d1d1d;letter-spacing:0.737px;-webkit-text-stroke:0.25px #1d1d1d;left:1219.8px;">Headlamp Ultralight</span>
<span class="t" id="p4" style="top:697.01px;font-size:15px;line-height:15px;font-weight:400;color:#f2f2f2;letter-spacing:0.798px;-webkit-text-stroke:0.3px #f2f2f2;left:533px;">Hiking Boots</span>
<span class="t" id="p5" style="top:697.01px;font-size:15px;line-height:15px;font-weight:400;color:#f2f2f2;letter-spacing:0.588px;-webkit-text-stroke:0.3px #f2f2f2;left:1219.8px;">Insect Repellent</span>
<span class="t" id="p6" style="top:850.01px;font-size:15px;line-height:15px;font-weight:400;color:#f2f2f2;letter-spacing:0.979px;-webkit-text-stroke:0.3px #f2f2f2;left:533px;">Multi-Tool</span>
<span class="t" id="pr1" style="top:516.00px;font-size:13.75px;line-height:13.75px;font-weight:400;color:#111;letter-spacing:-0.490px;left:1210.75px;transform:translateX(-50%);">150.50 €</span>
<span class="t" id="pr2" style="top:670.00px;font-size:13.75px;line-height:13.75px;font-weight:400;color:#111;letter-spacing:-0.504px;left:867.45px;transform:translateX(-50%);">169.00 €</span>
<span class="t" id="pr3" style="top:670.00px;font-size:13.75px;line-height:13.75px;font-weight:400;color:#111;letter-spacing:-0.582px;left:1553.51px;transform:translateX(-50%);">18.90 €</span>
<span class="t" id="pr4" style="top:823.00px;font-size:13.75px;line-height:13.75px;font-weight:400;color:#111;letter-spacing:-0.504px;left:867.45px;transform:translateX(-50%);">169.00 €</span>
<span class="t" id="pr5" style="top:823.00px;font-size:13.75px;line-height:13.75px;font-weight:400;color:#111;letter-spacing:-0.582px;left:1553.51px;transform:translateX(-50%);">13.05 €</span>
<span class="t" id="pr6" style="top:977.00px;font-size:13.75px;line-height:13.75px;font-weight:400;color:#111;letter-spacing:-0.482px;left:1210.46px;transform:translateX(-50%);">64.90 €</span>
<span class="t" id="bq" style="top:823.01px;font-size:14px;line-height:14px;font-weight:400;color:#1c1c2c;letter-spacing:0.000px;left:1222.20px;transform:translateX(-50%);font-family:NanumGothic,"Liberation Sans",sans-serif;">1</span>
</body></html>
